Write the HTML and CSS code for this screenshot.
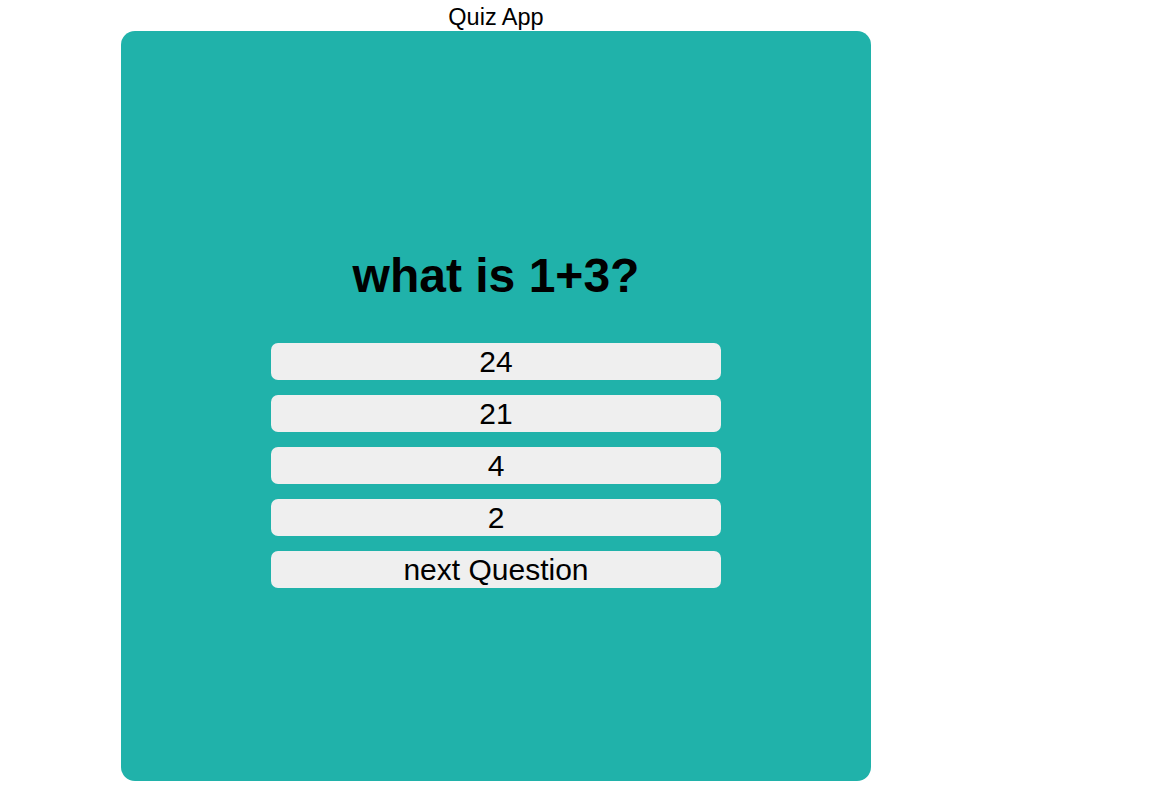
FILE: index.html
```html
<!DOCTYPE html>
<html>
<head>
<meta charset="utf-8">
<link rel="stylesheet" href="styles.css">
</head>
<body>
<div class="app">
  <div class="title">Quiz App</div>
  <div class="card">
    <h1 class="question">what is 1+3?</h1>
    <div class="answers">
      <button class="btn">24</button>
      <button class="btn">21</button>
      <button class="btn">4</button>
      <button class="btn">2</button>
      <button class="btn">next Question</button>
    </div>
  </div>
</div>
</body>
</html>
```
FILE: styles.css
```css
html, body {
  margin: 0;
  padding: 0;
  background: #fff;
  font-family: "Liberation Sans", Arial, sans-serif;
}
.app {
  width: 750px;
  margin-left: 121px;
  display: flex;
  flex-direction: column;
  align-items: center;
}
.title {
  font-size: 23.5px;
  line-height: 27px;
  height: 31px;
  padding-top: 4px;
  box-sizing: border-box;
  color: #000;
}
.card {
  width: 750px;
  height: 750px;
  box-sizing: border-box;
  padding-top: 24px;
  background: #20b2aa;
  border-radius: 14px;
  display: flex;
  flex-direction: column;
  align-items: center;
  justify-content: center;
}
.question {
  margin: 0 0 40px 0;
  font-size: 48px;
  line-height: 55px;
  font-weight: bold;
  color: #000;
}
.answers {
  display: flex;
  flex-direction: column;
  gap: 15px;
  width: 450px;
}
.btn {
  height: 37px;
  border: none;
  border-radius: 7px;
  background: #efefef;
  font-family: "Liberation Sans", Arial, sans-serif;
  font-size: 30px;
  line-height: 37px;
  padding: 0;
  color: #000;
}
```
